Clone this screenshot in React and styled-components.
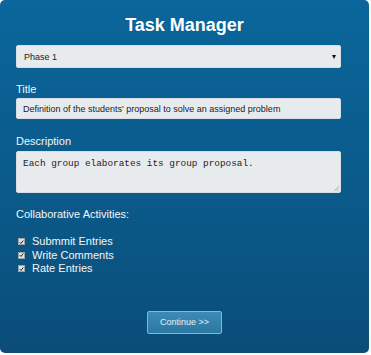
import styled, { createGlobalStyle } from "styled-components"

const GlobalStyle = createGlobalStyle`
  html, body {
    margin: 0;
    padding: 0;
    background: #ffffff;
  }
  body {
    font-family: "Liberation Sans", Arial, sans-serif;
  }
`

const activities = ["Submmit Entries", "Write Comments", "Rate Entries"]

const App = () => {
  return (
    <>
      <GlobalStyle />
      <Card>
        <Heading>Task Manager</Heading>
        <SelectBox>
          <span>Phase 1</span>
          <Arrow />
        </SelectBox>
        <Label $top={15}>Title</Label>
        <TextInput>Definition of the students' proposal to solve an assigned problem</TextInput>
        <Label $top={16}>Description</Label>
        <TextArea>
          Each group elaborates its group proposal.
          <Grip viewBox="0 0 6 6">
            <path d="M1 6 L6 1 M3.5 6 L6 3.5" stroke="#9aa3ab" strokeWidth="0.8" />
          </Grip>
        </TextArea>
        <Label $top={15}>Collaborative Activities:</Label>
        <CheckList>
          {activities.map((a) => (
            <CheckRow key={a}>
              <CheckBox>
                <svg viewBox="0 0 8 8" width="6" height="6">
                  <path d="M1.2 4.3 L3.2 6.3 L6.8 1.6" fill="none" stroke="#222" strokeWidth="1.6" />
                </svg>
              </CheckBox>
              {a}
            </CheckRow>
          ))}
        </CheckList>
        <ButtonRow>
          <ContinueButton>Continue &gt;&gt;</ContinueButton>
        </ButtonRow>
      </Card>
    </>
  )
}
export default App

const Card = styled.div`
  width: 369px;
  height: 353px;
  box-sizing: border-box;
  padding: 14px 28px 0 16px;
  border-radius: 5px;
  background: linear-gradient(to bottom, #0a669b 0%, #0a5a8a 55%, #0b4d79 100%);
  display: flex;
  flex-direction: column;
`
const Heading = styled.h1`
  margin: 0 0 9px 0;
  font-size: 18px;
  line-height: 22px;
  font-weight: bold;
  color: #ffffff;
  text-align: center;
  padding-left: 12px;
`
const fieldBase = `
  box-sizing: border-box;
  width: 325px;
  background: #e8ebee;
  border: 1px solid #d8dee4;
  border-radius: 2px;
  color: #222;
`
const SelectBox = styled.div`
  ${fieldBase}
  height: 23px;
  display: flex;
  align-items: center;
  justify-content: space-between;
  padding: 0 4px 0 7px;
  font-size: 9px;
`
const Arrow = styled.span`
  width: 0;
  height: 0;
  border-left: 2.5px solid transparent;
  border-right: 2.5px solid transparent;
  border-top: 4px solid #111;
`
const Label = styled.div`
  margin-top: ${(p) => p.$top}px;
  font-size: 11px;
  line-height: 13px;
  color: #f2f6f9;
`
const TextInput = styled.div`
  ${fieldBase}
  margin-top: 2px;
  height: 21px;
  display: flex;
  align-items: center;
  padding: 0 6px;
  font-size: 9px;
  white-space: nowrap;
`
const TextArea = styled.div`
  ${fieldBase}
  position: relative;
  margin-top: 3px;
  height: 42px;
  padding: 6px 6px;
  font-family: "Liberation Mono", "Courier New", monospace;
  font-size: 9.4px;
  line-height: 11px;
`
const Grip = styled.svg`
  position: absolute;
  right: 1px;
  bottom: 1px;
  width: 6px;
  height: 6px;
`
const CheckList = styled.div`
  margin-top: 14px;
  display: flex;
  flex-direction: column;
`
const CheckRow = styled.div`
  display: flex;
  align-items: center;
  gap: 7px;
  padding-left: 2px;
  font-size: 11px;
  line-height: 13.5px;
  color: #f2f6f9;
`
const CheckBox = styled.span`
  box-sizing: border-box;
  width: 7px;
  height: 7px;
  background: #dfe2e5;
  border: 1px solid #9aa4ad;
  display: flex;
  align-items: center;
  justify-content: center;
`
const ButtonRow = styled.div`
  margin-top: 35px;
  display: flex;
  justify-content: center;
  padding-left: 12px;
`
const ContinueButton = styled.button`
  box-sizing: border-box;
  width: 75px;
  height: 23px;
  border: 1px solid #86b6d0;
  border-radius: 2px;
  background: linear-gradient(to bottom, #3d8bb5, #2b78a3);
  color: #e6f1f7;
  font-family: "Liberation Sans", Arial, sans-serif;
  font-size: 9px;
  padding: 0;
`
